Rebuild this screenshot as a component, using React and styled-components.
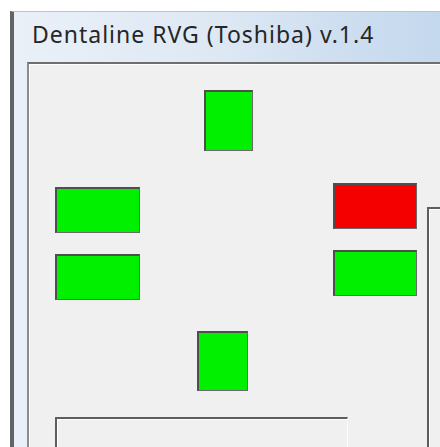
import React from "react";
import styled, { createGlobalStyle } from "styled-components";

const Global = createGlobalStyle`
  html, body { margin: 0; padding: 0; background: #ffffff; }
  body { width: 440px; height: 447px; overflow: hidden; }
  #root { width: 440px; height: 447px; }
`;

const Page = styled.div`
  width: 440px;
  height: 447px;
  box-sizing: border-box;
  padding: 11px 0 0 10px;
  overflow: hidden;
  background: #ffffff;
`;

const Window = styled.div`
  height: 100%;
  box-sizing: border-box;
  border-left: 4px solid #646464;
  border-top: 1px solid #b9c4d0;
  background: linear-gradient(90deg, #e9f0f8 0%, #dfe9f4 45%, #cfdff0 75%, #c4d8ee 100%);
  padding-left: 13px;
  display: flex;
  flex-direction: column;
  overflow: hidden;
`;

const TitleBar = styled.div`
  height: 50px;
  flex-shrink: 0;
  box-sizing: border-box;
  padding: 10px 0 0 5px;
  font-family: "Noto Sans", "Open Sans", sans-serif;
  font-size: 23px;
  letter-spacing: 1px;
  line-height: 24px;
  color: #262626;
  white-space: nowrap;
`;

const Client = styled.div`
  flex: 1;
  min-height: 0;
  overflow: hidden;
  box-sizing: border-box;
  background: #f0f0f0;
  border-top: 2px solid #6e6e6e;
  border-left: 2px solid #8c8c8c;
  box-shadow: inset 1px 1px 0 #ffffff;
  padding-top: 26px;
  display: flex;
  flex-direction: column;
  align-items: flex-start;
`;

const Lamp = styled.div`
  box-sizing: border-box;
  width: ${(p) => p.$w}px;
  height: ${(p) => p.$h}px;
  background: ${(p) => (p.$on ? "#00f000" : "#f40000")};
  border-top: 2px solid #4e4e4e;
  border-left: 2px solid #4e4e4e;
  border-right: 1px solid #6a6a6a;
  border-bottom: 1px solid #6a6a6a;
  flex-shrink: 0;
`;

const TopSlot = styled.div`
  margin-left: 175px;
  flex-shrink: 0;
`;

const Middle = styled.div`
  display: flex;
  align-items: flex-start;
  margin-top: 32px;
  flex-shrink: 0;
`;

const Column = styled.div`
  display: flex;
  flex-direction: column;
  gap: 21px;
  margin-top: ${(p) => p.$top || 0}px;
  margin-left: ${(p) => p.$left || 0}px;
`;

const SideGroup = styled.div`
  box-sizing: border-box;
  width: 60px;
  height: 400px;
  margin-bottom: -400px;
  margin-left: 10px;
  margin-top: 24px;
  border-top: 2px solid #5e5e5e;
  border-left: 2px solid #5e5e5e;
  box-shadow: inset 1px 1px 0 #ffffff;
`;

const BottomSlot = styled.div`
  margin-left: 168px;
  margin-top: 31px;
  flex-shrink: 0;
`;

const BottomGroup = styled.div`
  box-sizing: border-box;
  width: 293px;
  height: 200px;
  margin-left: 26px;
  margin-top: 26px;
  flex-shrink: 0;
  border-top: 2px solid #5e5e5e;
  border-left: 2px solid #5e5e5e;
  border-right: 1px solid #fbfbfb;
  box-shadow: inset 1px 1px 0 #ffffff;
`;

export default function App() {
  return (
    <>
      <Global />
      <Page>
        <Window>
          <TitleBar>Dentaline RVG (Toshiba) v.1.4</TitleBar>
          <Client>
            <TopSlot>
              <Lamp $w={49} $h={61} $on />
            </TopSlot>
            <Middle>
              <Column $left={26} $top={4}>
                <Lamp $w={85} $h={46} $on />
                <Lamp $w={85} $h={46} $on />
              </Column>
              <Column $left={193}>
                <Lamp $w={84} $h={46} $on={false} />
                <Lamp $w={84} $h={46} $on />
              </Column>
              <SideGroup />
            </Middle>
            <BottomSlot>
              <Lamp $w={51} $h={60} $on />
            </BottomSlot>
            <BottomGroup />
          </Client>
        </Window>
      </Page>
    </>
  );
}
